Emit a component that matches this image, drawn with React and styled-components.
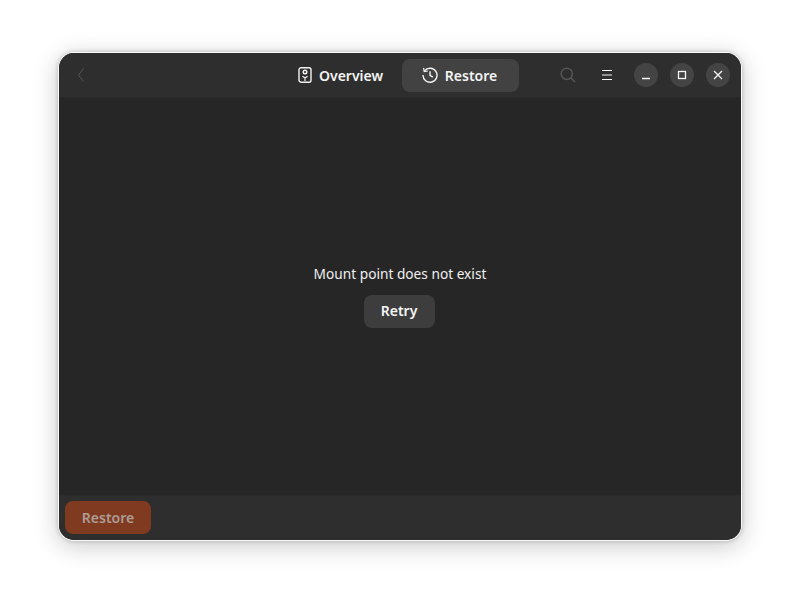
import React from 'react';
import styled, { createGlobalStyle } from 'styled-components';

const GlobalStyle = createGlobalStyle`
    html, body {
        margin: 0;
        padding: 0;
        background: #ffffff;
    }
    body {
        font-family: "Noto Sans", "Open Sans", sans-serif;
    }
`;

const Page = styled.div`
    width: 800px;
    height: 605px;
    box-sizing: border-box;
    padding: 53px 59px 65px;
    overflow: hidden;
`;

const Window = styled.div`
    height: 100%;
    display: flex;
    flex-direction: column;
    border-radius: 15px;
    overflow: hidden;
    background: #262626;
    box-shadow: 0 0 0 1px rgba(255, 255, 255, 0.9), 0 5px 24px 2px rgba(0, 0, 0, 0.2), 0 0 4px 1px rgba(0, 0, 0, 0.22);
`;

const Header = styled.header`
    height: 44px;
    flex: none;
    display: grid;
    grid-template-columns: 1fr auto 1fr;
    align-items: center;
    background: #2e2e2e;
    border-bottom: 1px solid #2a2a2a;
`;

const HeaderSide = styled.div`
    display: flex;
    align-items: center;
    justify-content: ${({ $end }) => ($end ? 'flex-end' : 'flex-start')};
    padding: ${({ $end }) => ($end ? '0 11px 0 0' : '0 0 0 18px')};
`;

const Tabs = styled.nav`
    display: flex;
    align-items: center;
    margin-left: 4px;
`;

const Tab = styled.div`
    height: 33px;
    width: 117px;
    box-sizing: border-box;
    padding-right: ${({ $pr }) => $pr || 0}px;
    display: flex;
    align-items: center;
    justify-content: center;
    gap: 7px;
    border-radius: 8px;
    background: ${({ $active }) => ($active ? '#424242' : 'transparent')};
    color: #f4f4f4;
    font-size: 14px;
    font-weight: 600;
`;

const IconSlot = styled.span`
    width: ${({ $w }) => $w || 16}px;
    height: 16px;
    display: inline-flex;
    align-items: center;
    justify-content: center;
    margin-right: ${({ $mr }) => $mr || 0}px;
    color: ${({ $dim }) => ($dim ? '#555555' : '#f6f6f6')};
`;

const WinButton = styled.button`
    width: 24px;
    height: 24px;
    padding: 0;
    margin-left: ${({ $ml }) => $ml || 0}px;
    border: 0;
    border-radius: 50%;
    display: flex;
    align-items: center;
    justify-content: center;
    background: #444444;
    color: #f6f6f6;
`;

const Content = styled.main`
    flex: 1;
    display: flex;
    flex-direction: column;
    align-items: center;
    justify-content: center;
    gap: 11px;
    padding-bottom: 2px;
`;

const Message = styled.div`
    color: #f0f0f0;
    font-size: 13.7px;
    line-height: 20px;
`;

const RetryButton = styled.button`
    width: 71px;
    height: 33px;
    padding: 0 0 2px;
    margin-right: 2px;
    border: 0;
    border-radius: 8px;
    background: #3d3d3d;
    color: #f6f6f6;
    font-family: inherit;
    font-size: 14px;
    font-weight: 600;
`;

const Footer = styled.footer`
    height: 45px;
    flex: none;
    box-sizing: border-box;
    display: flex;
    align-items: flex-start;
    padding: 5px 6px;
    background: #2e2e2e;
    border-top: 1px solid #2a2a2a;
`;

const RestoreButton = styled.button`
    width: 86px;
    height: 33px;
    padding: 0;
    border: 0;
    border-radius: 8px;
    background: #7f3a20;
    color: #ad9c95;
    font-family: inherit;
    font-size: 14px;
    font-weight: 600;
`;

const BackIcon = () => (
    <svg width="8" height="16" viewBox="0 0 8 16" fill="none" stroke="currentColor" strokeWidth="1">
        <path d="M6.5 1.5 L1.5 8 L6.5 14.5" />
    </svg>
);

const OverviewIcon = () => (
    <svg width="14" height="16" viewBox="0 0 14 16" fill="none" stroke="currentColor" strokeWidth="1.4">
        <rect x="1" y="0.8" width="12" height="14.4" rx="2" />
        <circle cx="7" cy="5" r="1.8" />
        <path d="M4.5 9.2 L7 11 L9.5 9.2 M7 11 V14" strokeWidth="1.2" />
    </svg>
);

const HistoryIcon = () => (
    <svg width="16" height="16" viewBox="0 0 16 16" fill="none" stroke="currentColor" strokeWidth="1.4">
        <path d="M2.6 3.8 A7 7 0 1 1 1 8" />
        <path d="M1.6 0.9 L2.2 4.6 L5.9 4" strokeWidth="1.2" />
        <path d="M8 4.2 V8.3 L10.8 10.2" />
    </svg>
);

const SearchIcon = () => (
    <svg width="16" height="16" viewBox="0 0 16 16" fill="none" stroke="currentColor" strokeWidth="1.5">
        <circle cx="6.8" cy="6.8" r="5.6" />
        <path d="M10.8 10.8 L15 15" />
    </svg>
);

const MenuIcon = () => (
    <svg width="12" height="12" viewBox="0 0 12 12" fill="none" stroke="currentColor" strokeWidth="1.2">
        <path d="M1 1.5 H11 M1 6 H11 M1 10.5 H11" />
    </svg>
);

const MinimizeIcon = () => (
    <svg width="10" height="10" viewBox="0 0 10 10" fill="none" stroke="currentColor" strokeWidth="1.3">
        <path d="M1 8.5 H9" />
    </svg>
);

const MaximizeIcon = () => (
    <svg width="10" height="10" viewBox="0 0 10 10" fill="none" stroke="currentColor" strokeWidth="1.3">
        <rect x="1.5" y="1.5" width="7" height="7" />
    </svg>
);

const CloseIcon = () => (
    <svg width="10" height="10" viewBox="0 0 10 10" fill="none" stroke="currentColor" strokeWidth="1.3">
        <path d="M1 1 L9 9 M9 1 L1 9" />
    </svg>
);

const App = () => {
    return (
        <Page>
            <GlobalStyle />
            <Window>
                <Header>
                    <HeaderSide>
                        <IconSlot $w={8} $dim><BackIcon /></IconSlot>
                    </HeaderSide>
                    <Tabs>
                        <Tab $pr={6}><OverviewIcon />Overview</Tab>
                        <Tab $pr={2} $active><HistoryIcon />Restore</Tab>
                    </Tabs>
                    <HeaderSide $end>
                        <IconSlot $dim $mr={23}><SearchIcon /></IconSlot>
                        <IconSlot $mr={19}><MenuIcon /></IconSlot>
                        <WinButton><MinimizeIcon /></WinButton>
                        <WinButton $ml={12}><MaximizeIcon /></WinButton>
                        <WinButton $ml={12}><CloseIcon /></WinButton>
                    </HeaderSide>
                </Header>
                <Content>
                    <Message>Mount point does not exist</Message>
                    <RetryButton>Retry</RetryButton>
                </Content>
                <Footer>
                    <RestoreButton>Restore</RestoreButton>
                </Footer>
            </Window>
        </Page>
    );
};

export default App;
